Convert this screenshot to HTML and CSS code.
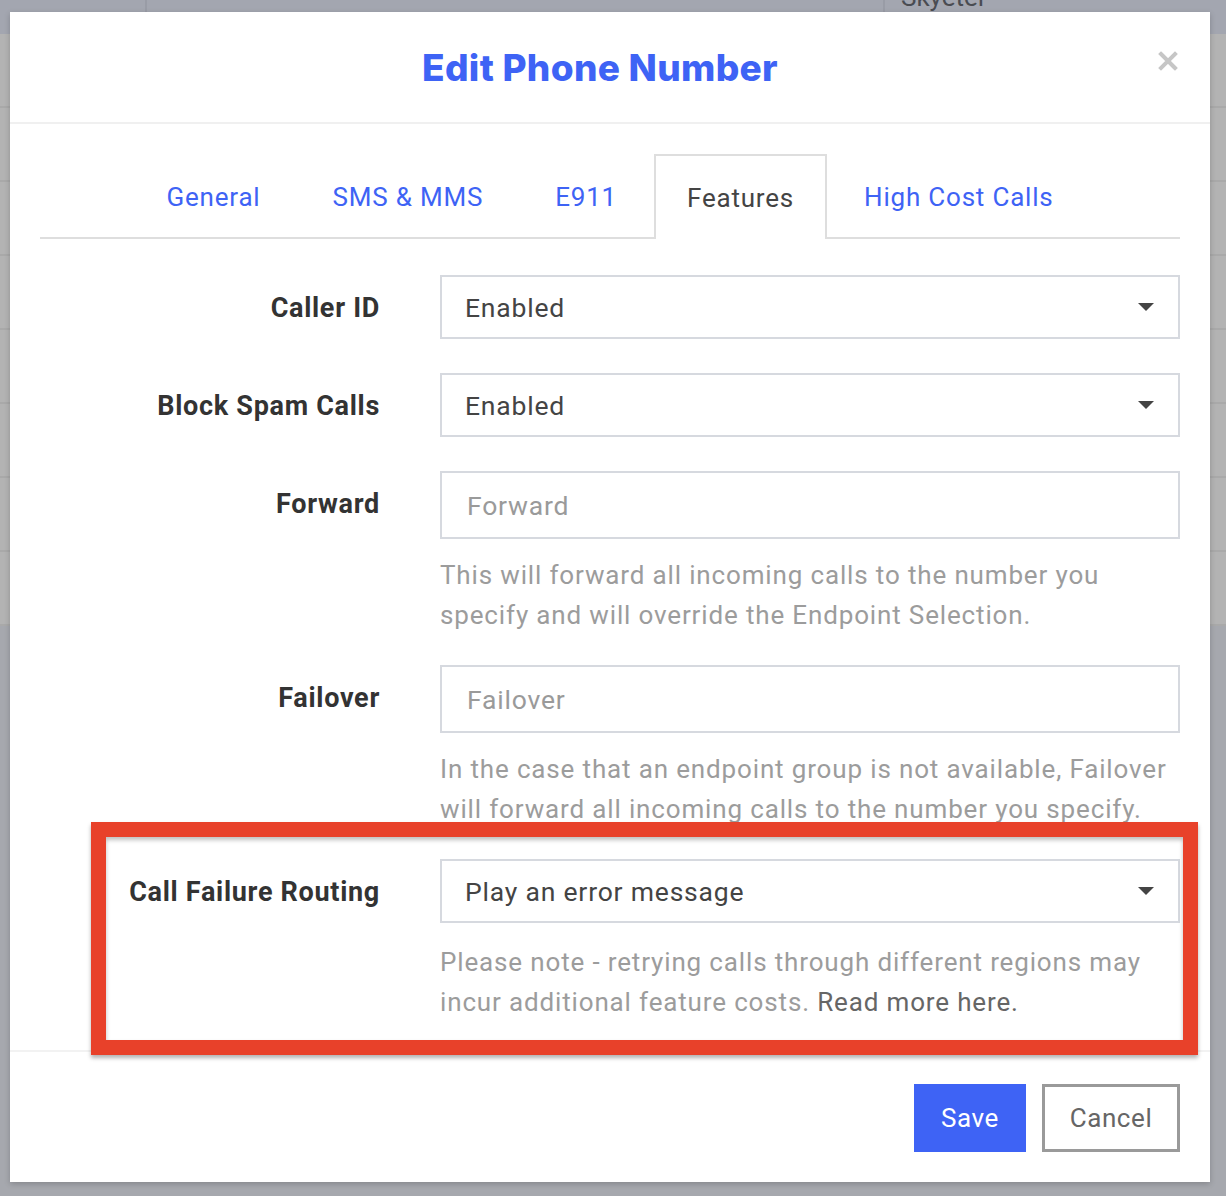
FILE: index.html
```html
<!DOCTYPE html>
<html>
<head>
<title>Edit Phone Number</title>
<link rel="stylesheet" href="styles.css">
</head>
<body>
<div class="page">
  <div class="topbar">
    <div class="topcell first"></div>
    <div class="topcell mid"></div>
    <div class="topcell brand">Skyetel</div>
  </div>
  <div class="rows">
    <div class="row"></div><div class="row"></div><div class="row"></div><div class="row"></div>
    <div class="row"></div><div class="row"></div><div class="row"></div><div class="row"></div>
  </div>
</div>

<div class="modal">
  <div class="modal-head">
    <h1 class="title">Edit Phone Number</h1>
    <svg class="close" width="20" height="20" viewBox="0 0 20 20">
      <path d="M3 3 L17 17 M17 3 L3 17" stroke="#c6c6c6" stroke-width="4" stroke-linecap="square"/>
    </svg>
  </div>

  <div class="modal-body">
    <ul class="tabs">
      <li class="tab">General</li>
      <li class="tab">SMS &amp; MMS</li>
      <li class="tab">E911</li>
      <li class="tab active">Features</li>
      <li class="tab">High Cost Calls</li>
    </ul>

    <div class="form">
      <div class="field">
        <label class="label">Caller ID</label>
        <div class="control">
          <div class="select"><span>Enabled</span><i class="caret"></i></div>
        </div>
      </div>

      <div class="field">
        <label class="label">Block Spam Calls</label>
        <div class="control">
          <div class="select"><span>Enabled</span><i class="caret"></i></div>
        </div>
      </div>

      <div class="field">
        <label class="label">Forward</label>
        <div class="control">
          <div class="input placeholder">Forward</div>
          <p class="help">This will forward all incoming calls to the number you specify and will override the Endpoint Selection.</p>
        </div>
      </div>

      <div class="field">
        <label class="label">Failover</label>
        <div class="control">
          <div class="input placeholder">Failover</div>
          <p class="help">In the case that an endpoint group is not available, Failover will forward all incoming calls to the number you specify.</p>
        </div>
      </div>

      <div class="field last">
        <label class="label">Call Failure Routing</label>
        <div class="control">
          <div class="select"><span>Play an error message</span><i class="caret"></i></div>
          <p class="help">Please note - retrying calls through different regions may incur additional feature costs. <a class="more">Read more here.</a></p>
        </div>
      </div>
    </div>
  </div>

  <div class="modal-foot">
    <button class="btn primary">Save</button>
    <button class="btn outline">Cancel</button>
  </div>

  <div class="callout"></div>
</div>
</body>
</html>
```

FILE: styles.css
```css
* {
  box-sizing: border-box;
}
html, body {
  margin: 0;
  height: 100%;
}
body {
  background: #a6a8ae;
  font-family: Roboto, "Liberation Sans", sans-serif;
  overflow: hidden;
}

/* dimmed page behind the dialog */
.page {
  height: 100%;
}
.topbar {
  height: 34px;
  background: #a3a6b0;
  display: flex;
  overflow: hidden;
}
.topcell {
  border-right: 2px solid #999ca6;
}
.topcell.first {
  width: 147px;
}
.topcell.mid {
  width: 738px;
}
.topcell.brand {
  flex: 1;
  border: none;
  padding-left: 16px;
  font-size: 26px;
  line-height: 1;
  margin-top: -16px;
  color: #4a4c52;
}
.rows {
  background: #b3b3b3;
}
.row {
  height: 74px;
  border-bottom: 2px solid #a9a9a9;
}

/* dialog */
.modal {
  position: absolute;
  left: 10px;
  top: 12px;
  width: 1200px;
  height: 1170px;
  background: #fff;
  box-shadow: 0 2px 6px rgba(0, 0, 0, 0.2);
  display: flex;
  flex-direction: column;
}
.modal-head {
  height: 112px;
  border-bottom: 2px solid #f0f0f0;
  display: flex;
  align-items: center;
  justify-content: center;
  position: relative;
}
.title {
  margin: 0 0 0 -20px;
  font-family: Inter, sans-serif;
  font-weight: 800;
  font-size: 37px;
  letter-spacing: 0.3px;
  color: #3e63f5;
}
.close {
  position: absolute;
  right: 32px;
  top: 39px;
}

.modal-body {
  flex: 1;
  padding: 30px 30px 0;
  border-bottom: 2px solid #f2f2f2;
}
.tabs {
  list-style: none;
  margin: 0;
  padding: 0;
  display: flex;
  justify-content: center;
  gap: 2px;
  border-bottom: 2px solid #dedede;
}
.tab {
  height: 83px;
  padding: 0 33px;
  display: flex;
  align-items: center;
  font-size: 26px;
  letter-spacing: 0.8px;
  color: #3e63f5;
  border: 2px solid transparent;
  border-bottom: none;
  margin-bottom: -2px;
}
.tab.active {
  color: #444;
  background: #fff;
  border-color: #dedede;
  height: 85px;
  padding: 0 31px;
}

.form {
  padding-top: 36px;
}
.field {
  display: flex;
  gap: 60px;
  margin-bottom: 34px;
}
.field.last {
  margin-bottom: 0;
}
.label {
  width: 340px;
  flex: none;
  text-align: right;
  font-weight: bold;
  font-size: 27px;
  letter-spacing: 0.7px;
  color: #333;
  height: 64px;
  line-height: 66px;
}
.control {
  flex: 1;
}
.select, .input {
  border: 2px solid #d6d9df;
  display: flex;
  align-items: center;
  font-size: 26.5px;
  letter-spacing: 0.8px;
  color: #444;
}
.select {
  height: 64px;
  padding: 0 24px 0 23px;
  justify-content: space-between;
}
.input {
  height: 68px;
  padding-left: 25px;
}
.placeholder {
  color: #9a9a9a;
}
.caret {
  width: 0;
  height: 0;
  border-left: 8px solid transparent;
  border-right: 8px solid transparent;
  border-top: 8px solid #444;
}
.help {
  margin: 16px 0 -4px;
  font-size: 26px;
  line-height: 40px;
  color: #9c9c9c;
  letter-spacing: 0.85px;
}
.field.last .help {
  margin-top: 19px;
}
.more {
  color: #666;
}

.modal-foot {
  display: flex;
  justify-content: flex-end;
  gap: 16px;
  padding: 32px 30px 30px;
}
.btn {
  height: 68px;
  font-family: inherit;
  font-size: 26px;
  letter-spacing: 0.6px;
  border-radius: 0;
  padding: 0;
}
.btn.primary {
  width: 112px;
  background: #3e63f5;
  border: none;
  color: #fff;
}
.btn.outline {
  width: 138px;
  background: #fff;
  border: 3px solid #9a9a9a;
  color: #666;
}

/* highlight frame over the routing row */
.callout {
  position: absolute;
  left: 81px;
  top: 810px;
  width: 1107px;
  height: 233px;
  border: 15px solid #e8412a;
  box-shadow: 0 3px 4px rgba(0, 0, 0, 0.3), inset 0 3px 4px rgba(0, 0, 0, 0.25);
}
```
